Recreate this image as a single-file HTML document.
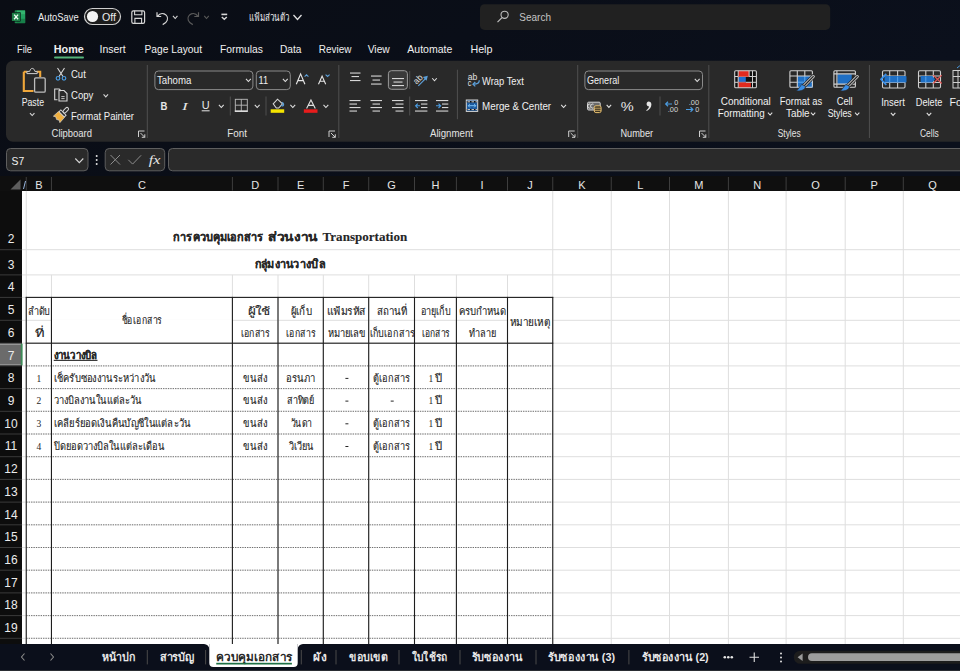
<!DOCTYPE html>
<html><head><meta charset="utf-8"><style>*{margin:0;padding:0}html,body{width:960px;height:671px;overflow:hidden;background:#0a0e16}</style></head><body>
<svg width="960" height="671" viewBox="0 0 960 671" style="position:absolute;left:0;top:0">
<defs>
<linearGradient id="tg" x1="0" y1="0" x2="1" y2="0.3">
<stop offset="0" stop-color="#0a0d14"/><stop offset="0.5" stop-color="#0a0e18"/><stop offset="1" stop-color="#0b101c"/>
</linearGradient>
</defs>
<rect x="0" y="0" width="960" height="176" fill="url(#tg)"/>
<rect x="14.7" y="10.2" width="10.6" height="13.1" rx="0.8" fill="#1f8a4e"/>
<rect x="17" y="10.6" width="8" height="4" fill="#33b36f"/><rect x="17" y="14.6" width="8" height="4.3" fill="#21a060"/><rect x="17" y="18.9" width="8" height="4" fill="#17804a"/>
<rect x="11.4" y="12.3" width="9.4" height="9.2" rx="0.8" fill="#0b0d12"/>
<rect x="11.9" y="12.8" width="8.4" height="8.2" rx="0.6" fill="#1e7f48"/>
<path d="M14.1 14.6l4 4.6M18.1 14.6l-4 4.6" stroke="#f2fff6" stroke-width="1.3"/>
<text x="38.00" y="20.60" font-size="11" fill="#ececec" font-weight="normal" font-family="Liberation Sans" textLength="40.60" lengthAdjust="spacingAndGlyphs" >AutoSave</text>
<rect x="84.5" y="8.5" width="36" height="16" rx="8" fill="#1c1c1c" stroke="#cfcfcf" stroke-width="1.2"/>
<circle cx="92.5" cy="16.5" r="5.6" fill="#f4f4f4"/>
<text x="102.00" y="20.60" font-size="10.5" fill="#ececec" font-weight="normal" font-family="Liberation Sans" textLength="14.00" lengthAdjust="spacingAndGlyphs" >Off</text>
<rect x="131.8" y="10.8" width="12.8" height="12.6" rx="1.6" fill="none" stroke="#d6d6d6" stroke-width="1.2"/>
<path d="M134.6 10.8v3.9h7.3v-3.9M134.9 23.4v-5h6.7v5" fill="none" stroke="#d6d6d6" stroke-width="1.1"/>
<path d="M157 12.3v4.2h4.2M157.5 16.3c1.5-2.2 4.2-3.3 6.7-2.4 2.6 1 3.9 3.8 3 6.5-0.6 1.8-2.3 3.2-4.5 4.2" fill="none" stroke="#d6d6d6" stroke-width="1.2"/>
<path d="M172.95 15.90 L175.20 18.50 L177.45 15.90" fill="none" stroke="#d6d6d6" stroke-width="1.1"/>
<path d="M198.5 12.3v4.2h-4.2M198 16.3c-1.5-2.2-4.2-3.3-6.7-2.4-2.6 1-3.9 3.8-3 6.5 0.6 1.8 2.3 3.2 4.5 4.2" fill="none" stroke="#5a5a5a" stroke-width="1.2"/>
<path d="M204.25 15.90 L206.50 18.50 L208.75 15.90" fill="none" stroke="#5a5a5a" stroke-width="1.1"/>
<rect x="221.4" y="13.6" width="5.8" height="1.6" fill="#d6d6d6"/>
<path d="M221.8 16.9l2.5 2.4 2.5-2.4" fill="none" stroke="#d6d6d6" stroke-width="1.4"/>
<text x="248.70" y="21.00" font-size="11" fill="#ececec" font-weight="normal" font-family="Liberation Sans" textLength="40.60" lengthAdjust="spacingAndGlyphs" >แฟ้มส่วนตัว</text>
<path d="M293.50 15.05 L297.50 19.55 L301.50 15.05" fill="none" stroke="#e0e0e0" stroke-width="1.3"/>
<rect x="480" y="4.2" width="350.2" height="25.7" rx="4.5" fill="#212121"/>
<circle cx="504.6" cy="14.8" r="3.6" fill="none" stroke="#bdbdbd" stroke-width="1.1"/>
<path d="M502 17.6l-4.5 4.6" stroke="#bdbdbd" stroke-width="1.2"/>
<text x="519.30" y="21.00" font-size="11" fill="#c4c4c4" font-weight="normal" font-family="Liberation Sans" textLength="31.70" lengthAdjust="spacingAndGlyphs" >Search</text>
<text x="17.00" y="53.20" font-size="10.6" fill="#f0f0f0" font-weight="normal" font-family="Liberation Sans" textLength="15.00" lengthAdjust="spacingAndGlyphs" >File</text>
<text x="53.75" y="53.20" font-size="10.6" fill="#f0f0f0" font-weight="bold" font-family="Liberation Sans" textLength="30.00" lengthAdjust="spacingAndGlyphs" >Home</text>
<text x="99.50" y="53.20" font-size="10.6" fill="#f0f0f0" font-weight="normal" font-family="Liberation Sans" textLength="26.25" lengthAdjust="spacingAndGlyphs" >Insert</text>
<text x="144.50" y="53.20" font-size="10.6" fill="#f0f0f0" font-weight="normal" font-family="Liberation Sans" textLength="57.50" lengthAdjust="spacingAndGlyphs" >Page Layout</text>
<text x="220.00" y="53.20" font-size="10.6" fill="#f0f0f0" font-weight="normal" font-family="Liberation Sans" textLength="42.90" lengthAdjust="spacingAndGlyphs" >Formulas</text>
<text x="280.00" y="53.20" font-size="10.6" fill="#f0f0f0" font-weight="normal" font-family="Liberation Sans" textLength="21.50" lengthAdjust="spacingAndGlyphs" >Data</text>
<text x="318.80" y="53.20" font-size="10.6" fill="#f0f0f0" font-weight="normal" font-family="Liberation Sans" textLength="32.60" lengthAdjust="spacingAndGlyphs" >Review</text>
<text x="367.70" y="53.20" font-size="10.6" fill="#f0f0f0" font-weight="normal" font-family="Liberation Sans" textLength="22.10" lengthAdjust="spacingAndGlyphs" >View</text>
<text x="407.30" y="53.20" font-size="10.6" fill="#f0f0f0" font-weight="normal" font-family="Liberation Sans" textLength="45.00" lengthAdjust="spacingAndGlyphs" >Automate</text>
<text x="470.40" y="53.20" font-size="10.6" fill="#f0f0f0" font-weight="normal" font-family="Liberation Sans" textLength="22.10" lengthAdjust="spacingAndGlyphs" >Help</text>
<rect x="54" y="56.6" width="30" height="2" rx="1" fill="#55b37a"/>
<rect x="6" y="60.8" width="970" height="81" rx="7" fill="#292929"/>
<rect x="146.80" y="65" width="1" height="73" fill="#4f4f4f"/>
<rect x="338.30" y="65" width="1" height="73" fill="#4f4f4f"/>
<rect x="577.20" y="65" width="1" height="73" fill="#4f4f4f"/>
<rect x="708.30" y="65" width="1" height="73" fill="#4f4f4f"/>
<rect x="868.90" y="65" width="1" height="73" fill="#4f4f4f"/>
<text x="51.60" y="137.10" font-size="10" fill="#e4e4e4" font-weight="normal" font-family="Liberation Sans" textLength="40.40" lengthAdjust="spacingAndGlyphs" >Clipboard</text>
<path d="M138.5 137.0V131.0H144.5" fill="none" stroke="#cfcfcf" stroke-width="1"/>
<path d="M140.5 133.0L144.8 137.3M141.8 137.3H144.8V134.3" fill="none" stroke="#cfcfcf" stroke-width="1"/>
<text x="227.30" y="137.20" font-size="10" fill="#e4e4e4" font-weight="normal" font-family="Liberation Sans" textLength="19.70" lengthAdjust="spacingAndGlyphs" >Font</text>
<path d="M329.0 137.0V131.0H335.0" fill="none" stroke="#cfcfcf" stroke-width="1"/>
<path d="M331.0 133.0L335.3 137.3M332.3 137.3H335.3V134.3" fill="none" stroke="#cfcfcf" stroke-width="1"/>
<text x="430.00" y="137.40" font-size="10" fill="#e4e4e4" font-weight="normal" font-family="Liberation Sans" textLength="43.00" lengthAdjust="spacingAndGlyphs" >Alignment</text>
<path d="M568.7 137.0V131.0H574.7" fill="none" stroke="#cfcfcf" stroke-width="1"/>
<path d="M570.7 133.0L575.0 137.3M572.0 137.3H575.0V134.3" fill="none" stroke="#cfcfcf" stroke-width="1"/>
<text x="620.40" y="137.20" font-size="10" fill="#e4e4e4" font-weight="normal" font-family="Liberation Sans" textLength="32.70" lengthAdjust="spacingAndGlyphs" >Number</text>
<path d="M699.5 137.0V131.0H705.5" fill="none" stroke="#cfcfcf" stroke-width="1"/>
<path d="M701.5 133.0L705.8 137.3M702.8 137.3H705.8V134.3" fill="none" stroke="#cfcfcf" stroke-width="1"/>
<text x="777.70" y="137.20" font-size="10" fill="#e4e4e4" font-weight="normal" font-family="Liberation Sans" textLength="22.90" lengthAdjust="spacingAndGlyphs" >Styles</text>
<text x="920.00" y="137.20" font-size="10" fill="#e4e4e4" font-weight="normal" font-family="Liberation Sans" textLength="18.75" lengthAdjust="spacingAndGlyphs" >Cells</text>
<path d="M23.8 71.8h3.2M37 71.8h3.2v5.2M33.5 91h-9.7V71.8" fill="none" stroke="#f0a73a" stroke-width="2.1"/>
<path d="M26.9 73.6v-2.2l2.8 0c.5-1.8 1.3-3 2.6-3s2.1 1.2 2.6 3l2.3 0v2.2z" fill="#292929" stroke="#cfcfcf" stroke-width="1"/>
<rect x="34.6" y="77.9" width="10.6" height="14.2" rx="1.2" fill="#292929" stroke="#bdbdbd" stroke-width="1.3"/>
<text x="21.70" y="105.50" font-size="10" fill="#f0f0f0" font-weight="normal" font-family="Liberation Sans" textLength="22.30" lengthAdjust="spacingAndGlyphs" >Paste</text>
<path d="M29.95 113.05 L32.20 115.55 L34.45 113.05" fill="none" stroke="#d6d6d6" stroke-width="1.1"/>
<path d="M57.5 68l5.5 8.5M64.5 68l-5.5 8.5" stroke="#d6d6d6" stroke-width="1.1"/>
<circle cx="58" cy="78.3" r="1.8" fill="none" stroke="#4a9be0" stroke-width="1.2"/><circle cx="64" cy="78.3" r="1.8" fill="none" stroke="#4a9be0" stroke-width="1.2"/>
<text x="71.00" y="77.75" font-size="10" fill="#f0f0f0" font-weight="normal" font-family="Liberation Sans" textLength="14.80" lengthAdjust="spacingAndGlyphs" >Cut</text>
<path d="M57.5 99.8h-2.8v-10.8h4.5l2 2" fill="none" stroke="#d6d6d6" stroke-width="1.1"/>
<path d="M59 101v-10.5h5l3 3v7.5z" fill="none" stroke="#d6d6d6" stroke-width="1.1"/><path d="M61.3 96.6h3.3M61.3 98.6h3.3" stroke="#d6d6d6" stroke-width=".9"/>
<text x="71.00" y="99.20" font-size="10" fill="#f0f0f0" font-weight="normal" font-family="Liberation Sans" textLength="22.40" lengthAdjust="spacingAndGlyphs" >Copy</text>
<path d="M103.55 94.35 L105.80 96.85 L108.05 94.35" fill="none" stroke="#d6d6d6" stroke-width="1.1"/>
<g transform="rotate(45 60.5 115.5)">
<rect x="59" y="104.8" width="3" height="6.5" rx="1.5" fill="none" stroke="#d6d6d6" stroke-width="1"/>
<rect x="56.8" y="111.3" width="7.4" height="2.6" fill="none" stroke="#d6d6d6" stroke-width="1"/>
<path d="M56.3 114.2h8.4l.4 6.8-2.2-1.2-2.4 1.3-2.3-1.3-2.3 1.2z" fill="#f0b040" stroke="#d6d6d6" stroke-width="0.6"/>
</g>
<text x="71.00" y="120.00" font-size="10" fill="#f0f0f0" font-weight="normal" font-family="Liberation Sans" textLength="63.00" lengthAdjust="spacingAndGlyphs" >Format Painter</text>
<rect x="154.9" y="71" width="98" height="18.6" rx="3.5" fill="#292929" stroke="#8a8a8a" stroke-width="1"/>
<text x="157.00" y="83.50" font-size="10" fill="#f0f0f0" font-weight="normal" font-family="Liberation Sans" textLength="34.25" lengthAdjust="spacingAndGlyphs" >Tahoma</text>
<path d="M246.00 78.90 L248.40 81.50 L250.80 78.90" fill="none" stroke="#e0e0e0" stroke-width="1.1"/>
<rect x="256.3" y="71" width="34" height="18.6" rx="3.5" fill="#292929" stroke="#8a8a8a" stroke-width="1"/>
<text x="258.50" y="83.50" font-size="10" fill="#f0f0f0" font-weight="normal" font-family="Liberation Sans" textLength="9.50" lengthAdjust="spacingAndGlyphs" >11</text>
<path d="M282.90 78.90 L285.30 81.50 L287.70 78.90" fill="none" stroke="#e0e0e0" stroke-width="1.1"/>
<path d="M296.3 84.2L300.6 73.9 304.9 84.2M297.9 80.6h5.4" fill="none" stroke="#e6e6e6" stroke-width="1.15"/>
<path d="M304.6 76.6l1.9-1.8 1.9 1.8" fill="none" stroke="#5c9fd8" stroke-width="1.1"/>
<path d="M318.5 84.2L322.1 76.1 325.7 84.2M319.8 81.2h4.6" fill="none" stroke="#e6e6e6" stroke-width="1.1"/>
<path d="M325.6 74.6l2 1.8 2-1.8" fill="none" stroke="#5c9fd8" stroke-width="1.1"/>
<text x="160.60" y="109.70" font-size="10.5" fill="#e6e6e6" font-weight="bold" font-family="Liberation Sans" textLength="6.90" lengthAdjust="spacingAndGlyphs" >B</text>
<text x="182.00" y="109.70" font-size="10.5" fill="#e6e6e6" font-weight="normal" font-family="Liberation Serif" textLength="5.70" lengthAdjust="spacingAndGlyphs" font-style="italic">I</text>
<text x="201.70" y="108.50" font-size="10" fill="#e6e6e6" font-weight="normal" font-family="Liberation Sans" textLength="7.90" lengthAdjust="spacingAndGlyphs" >U</text>
<rect x="201.7" y="110.3" width="7.9" height="1" fill="#e6e6e6"/>
<path d="M218.90 104.90 L221.30 107.50 L223.70 104.90" fill="none" stroke="#e0e0e0" stroke-width="1.1"/>
<rect x="229.8" y="96.5" width="1" height="19" fill="#4f4f4f"/>
<rect x="235.3" y="99.3" width="12" height="11.8" fill="none" stroke="#bcbcbc" stroke-width="0.9"/><path d="M241.3 99.3v11.8M235.3 105.2h12" stroke="#bcbcbc" stroke-width="0.9"/>
<rect x="234.8" y="110.5" width="13" height="1.4" fill="#e6e6e6"/>
<path d="M254.80 104.90 L257.20 107.50 L259.60 104.90" fill="none" stroke="#e0e0e0" stroke-width="1.1"/>
<rect x="265.5" y="96.5" width="1" height="19" fill="#4f4f4f"/>
<path d="M273.2 103.8l4.3-4.6 5 4.7-3.8 4.1h-2.4z" fill="none" stroke="#d6d6d6" stroke-width="1.1"/><path d="M282.3 102.2c1.2 1.2 1.6 2.4.9 3.4-.6.6-1.5.4-1.7-.4" stroke="#5c9fd8" stroke-width="1.3" fill="none"/>
<rect x="270.7" y="109.3" width="13.5" height="3.5" fill="#f5e400"/>
<path d="M290.40 104.90 L292.80 107.50 L295.20 104.90" fill="none" stroke="#e0e0e0" stroke-width="1.1"/>
<path d="M306.6 108.6L310.95 100l4.35 8.6M308.2 105.4h5.5" fill="none" stroke="#e0e0e0" stroke-width="1.1"/>
<rect x="303.85" y="109.3" width="13.65" height="3.5" fill="#e81c1c"/>
<path d="M323.50 104.90 L325.90 107.50 L328.30 104.90" fill="none" stroke="#e0e0e0" stroke-width="1.1"/>
<rect x="350.00" y="72.50" width="10.50" height="1.1" fill="#d6d6d6"/>
<rect x="351.50" y="76.00" width="7.50" height="1.1" fill="#d6d6d6"/>
<rect x="350.00" y="80.00" width="10.50" height="1.1" fill="#d6d6d6"/>
<rect x="371.00" y="75.50" width="10.60" height="1.1" fill="#d6d6d6"/>
<rect x="372.50" y="79.50" width="7.50" height="1.1" fill="#d6d6d6"/>
<rect x="371.00" y="83.50" width="10.60" height="1.1" fill="#d6d6d6"/>
<rect x="388.4" y="70.7" width="19" height="18.6" rx="3" fill="#3a3a3a" stroke="#9a9a9a" stroke-width="1"/>
<rect x="392.00" y="78.00" width="12.00" height="1.1" fill="#d6d6d6"/>
<rect x="393.50" y="81.50" width="9.00" height="1.1" fill="#d6d6d6"/>
<rect x="392.00" y="85.00" width="12.00" height="1.1" fill="#d6d6d6"/>
<rect x="409.2" y="71" width="1" height="18" fill="#4f4f4f"/>
<text x="417.8" y="82.2" font-size="8.5" fill="#e0e0e0" font-family="Liberation Sans" text-anchor="middle" transform="rotate(-45 417.8 79.2)">ab</text>
<path d="M418.3 85.8l8.2-8.2" fill="none" stroke="#5c9fd8" stroke-width="1.2"/><path d="M427.8 75.8l-5 1.2 3.8 3.8z" fill="#5c9fd8"/>
<path d="M432.25 78.25 L434.50 80.75 L436.75 78.25" fill="none" stroke="#e0e0e0" stroke-width="1.1"/>
<rect x="349.50" y="100.00" width="11.00" height="1.1" fill="#d6d6d6"/>
<rect x="349.50" y="103.50" width="7.50" height="1.1" fill="#d6d6d6"/>
<rect x="349.50" y="107.00" width="11.00" height="1.1" fill="#d6d6d6"/>
<rect x="349.50" y="110.50" width="7.50" height="1.1" fill="#d6d6d6"/>
<rect x="370.50" y="100.00" width="11.50" height="1.1" fill="#d6d6d6"/>
<rect x="372.50" y="103.50" width="7.50" height="1.1" fill="#d6d6d6"/>
<rect x="370.50" y="107.00" width="11.50" height="1.1" fill="#d6d6d6"/>
<rect x="372.50" y="110.50" width="7.50" height="1.1" fill="#d6d6d6"/>
<rect x="392.00" y="100.00" width="11.50" height="1.1" fill="#d6d6d6"/>
<rect x="395.50" y="103.50" width="8.00" height="1.1" fill="#d6d6d6"/>
<rect x="392.00" y="107.00" width="11.50" height="1.1" fill="#d6d6d6"/>
<rect x="395.50" y="110.50" width="8.00" height="1.1" fill="#d6d6d6"/>
<rect x="409.2" y="96.5" width="1" height="19" fill="#4f4f4f"/>
<rect x="415.00" y="100.00" width="12.40" height="1.1" fill="#d6d6d6"/>
<rect x="415.00" y="110.50" width="12.40" height="1.1" fill="#d6d6d6"/>
<rect x="421.00" y="103.50" width="6.40" height="1.1" fill="#d6d6d6"/>
<rect x="421.00" y="107.00" width="6.40" height="1.1" fill="#d6d6d6"/>
<path d="M420 105.8h-4.5M417.8 103.6l-2.2 2.2 2.2 2.2" fill="none" stroke="#4a9be0" stroke-width="1.1"/>
<rect x="436.00" y="100.00" width="12.30" height="1.1" fill="#d6d6d6"/>
<rect x="436.00" y="110.50" width="12.30" height="1.1" fill="#d6d6d6"/>
<rect x="442.00" y="103.50" width="6.30" height="1.1" fill="#d6d6d6"/>
<rect x="442.00" y="107.00" width="6.30" height="1.1" fill="#d6d6d6"/>
<path d="M436 105.8h4.5M438.5 103.6l2.2 2.2-2.2 2.2" fill="none" stroke="#4a9be0" stroke-width="1.1"/>
<rect x="456.9" y="69.7" width="1" height="49.5" fill="#4f4f4f"/>
<text x="467.70" y="79.60" font-size="8.5" fill="#e0e0e0" font-weight="normal" font-family="Liberation Sans" textLength="9.60" lengthAdjust="spacingAndGlyphs" >ab</text>
<text x="467.70" y="85.60" font-size="8.5" fill="#e0e0e0" font-weight="normal" font-family="Liberation Sans" textLength="3.70" lengthAdjust="spacingAndGlyphs" >c</text>
<path d="M479.3 80.3c0 2.6-1.9 3.9-5.6 3.9" fill="none" stroke="#5c9fd8" stroke-width="1.3"/><path d="M475.3 82l-2.3 2.2 2.3 2.2" fill="none" stroke="#5c9fd8" stroke-width="1.3"/>
<text x="482.10" y="84.60" font-size="10" fill="#f0f0f0" font-weight="normal" font-family="Liberation Sans" textLength="41.70" lengthAdjust="spacingAndGlyphs" >Wrap Text</text>
<rect x="466.3" y="100" width="11.4" height="11.4" fill="#1c5a9e" stroke="#d6d6d6" stroke-width="1"/>
<path d="M466.8 101.8h10.4M466.8 109.6h10.4" stroke="#101010" stroke-width="1.4"/><path d="M467.5 101.8h10M467.5 109.6h10" stroke="#d0d0d0" stroke-width="1" stroke-dasharray="2.5 1.5"/>
<path d="M468.2 105.7h7.6M469.9 104l-1.7 1.7 1.7 1.7M474.1 104l1.7 1.7-1.7 1.7" fill="none" stroke="#7cc0f5" stroke-width="1"/>
<text x="482.10" y="110.10" font-size="10" fill="#f0f0f0" font-weight="normal" font-family="Liberation Sans" textLength="69.00" lengthAdjust="spacingAndGlyphs" >Merge &amp; Center</text>
<path d="M561.20 104.90 L563.60 107.50 L566.00 104.90" fill="none" stroke="#e0e0e0" stroke-width="1.1"/>
<rect x="584.9" y="71" width="117.6" height="18.6" rx="3.5" fill="#292929" stroke="#8a8a8a" stroke-width="1"/>
<text x="587.00" y="83.50" font-size="10" fill="#f0f0f0" font-weight="normal" font-family="Liberation Sans" textLength="32.20" lengthAdjust="spacingAndGlyphs" >General</text>
<path d="M694.80 78.90 L697.20 81.50 L699.60 78.90" fill="none" stroke="#e0e0e0" stroke-width="1.1"/>
<rect x="587.6" y="102.2" width="12.6" height="7.8" rx="1" fill="#6a6a6a" stroke="#d6d6d6" stroke-width="1"/>
<path d="M590.5 104.3a2 2 0 1 0 0 3.6M593.5 104.3a2 2 0 1 0 0 3.6" fill="none" stroke="#f0f0f0" stroke-width="0.9"/>
<rect x="594.3" y="105.8" width="6.8" height="6.8" rx="1.6" fill="#3b3220" stroke="#e8c070" stroke-width="1"/><path d="M594.5 108.2h6.5M594.5 110.3h6.5" stroke="#e8c070" stroke-width="0.8"/>
<path d="M606.65 104.95 L608.90 107.45 L611.15 104.95" fill="none" stroke="#e0e0e0" stroke-width="1.1"/>
<text x="620.80" y="111.30" font-size="13" fill="#e6e6e6" font-weight="normal" font-family="Liberation Sans" textLength="12.95" lengthAdjust="spacingAndGlyphs" >%</text>
<path d="M648.5 101.5c1.8 0 2.9 1.2 2.9 2.9 0 2.8-1.8 5.2-4.6 6.6l-.6-.8c1.5-.9 2.6-2.2 2.9-3.7-1.5 0-2.5-1-2.5-2.4s1-2.6 1.9-2.6z" fill="#e6e6e6"/>
<rect x="659.5" y="96.5" width="1" height="19" fill="#4f4f4f"/>
<path d="M672 104h-6.5M668 101.8l-2.3 2.2 2.3 2.2" fill="none" stroke="#4a9be0" stroke-width="1.2"/>
<text x="674.20" y="105.20" font-size="7.3" fill="#d6d6d6" font-weight="normal" font-family="Liberation Sans" textLength="4.00" lengthAdjust="spacingAndGlyphs" >0</text>
<text x="667.80" y="111.90" font-size="7.3" fill="#d6d6d6" font-weight="normal" font-family="Liberation Sans" textLength="10.40" lengthAdjust="spacingAndGlyphs" >.00</text>
<text x="688.80" y="105.20" font-size="7.3" fill="#d6d6d6" font-weight="normal" font-family="Liberation Sans" textLength="10.40" lengthAdjust="spacingAndGlyphs" >.00</text>
<path d="M686 109.5h6.8M690.5 107.3l2.3 2.2-2.3 2.2" fill="none" stroke="#4a9be0" stroke-width="1.2"/>
<text x="695.20" y="111.90" font-size="7.3" fill="#d6d6d6" font-weight="normal" font-family="Liberation Sans" textLength="4.00" lengthAdjust="spacingAndGlyphs" >0</text>
<rect x="734.7" y="70.8" width="21.7" height="17" rx="1" fill="#101010"/>
<rect x="738.2" y="70.8" width="10.9" height="5.7" fill="#e02a1f"/><rect x="738.2" y="82.3" width="12.7" height="5.5" fill="#e02a1f"/><rect x="738.2" y="76.5" width="7.6" height="5.8" fill="#1f6fd0"/>
<rect x="734.7" y="70.8" width="21.7" height="17" rx="1" fill="none" stroke="#cfcfcf" stroke-width="1.1"/>
<path d="M734.7 76.5h3.5M749.1 76.5h7.3M734.7 82.3h3.5M745.8 82.3h10.6M738.2 70.8v17M752.5 70.8v17M749.1 70.8v5.7" stroke="#cfcfcf" stroke-width="1" fill="none"/>
<path d="M738.2 76.5h10.9M738.2 82.3h7.6" stroke="#f07060" stroke-width="0.8" fill="none"/>
<text x="720.80" y="104.90" font-size="10" fill="#f0f0f0" font-weight="normal" font-family="Liberation Sans" textLength="50.00" lengthAdjust="spacingAndGlyphs" >Conditional</text>
<text x="717.70" y="117.40" font-size="10" fill="#f0f0f0" font-weight="normal" font-family="Liberation Sans" textLength="46.90" lengthAdjust="spacingAndGlyphs" >Formatting</text>
<path d="M767.95 112.60 L770.10 115.00 L772.25 112.60" fill="none" stroke="#e0e0e0" stroke-width="1.1"/>
<rect x="797.3" y="76" width="15.5" height="11.8" fill="#1f6fc4"/>
<path d="M797.3 82.2h15.5M804.8 76v11.8" stroke="#5aa8f0" stroke-width="1"/>
<rect x="789.9" y="70.7" width="22.5" height="16.6" rx="1" fill="none" stroke="#cfcfcf" stroke-width="1.1"/>
<path d="M789.9 76h7.4M789.9 82.2h7.4M797.3 70.7v16.6M804.8 70.7v5.3M797.3 76h15.1" stroke="#cfcfcf" stroke-width="1.1" fill="none"/>
<line x1="813.3" y1="76.5" x2="803.5" y2="86.5" stroke="#292929" stroke-width="4.6" stroke-linecap="round"/>
<line x1="813.3" y1="76.5" x2="803.5" y2="86.5" stroke="#d6d6d6" stroke-width="3" stroke-linecap="round"/>
<line x1="813.3" y1="76.5" x2="803.5" y2="86.5" stroke="#292929" stroke-width="1.2" stroke-linecap="round"/>
<path d="M805.50 86.20C805.30 89.70 801.50 91.30 796.30 90.90C798.90 89.50 799.30 86.30 801.90 84.50Z" fill="#3a8ee6" stroke="#292929" stroke-width="0.7"/>
<text x="779.80" y="104.90" font-size="10" fill="#f0f0f0" font-weight="normal" font-family="Liberation Sans" textLength="42.30" lengthAdjust="spacingAndGlyphs" >Format as</text>
<text x="786.00" y="117.40" font-size="10" fill="#f0f0f0" font-weight="normal" font-family="Liberation Sans" textLength="23.60" lengthAdjust="spacingAndGlyphs" >Table</text>
<path d="M810.95 112.60 L813.10 115.00 L815.25 112.60" fill="none" stroke="#e0e0e0" stroke-width="1.1"/>
<rect x="837.4" y="74.2" width="14.3" height="9.8" fill="#1f6fc4"/>
<rect x="833.9" y="70.7" width="21.5" height="16.6" rx="1" fill="none" stroke="#cfcfcf" stroke-width="1.1"/>
<path d="M833.9 73.9h21.5M833.9 84.1h21.5M836.9 70.7v16.6" stroke="#cfcfcf" stroke-width="1.1" fill="none"/>
<line x1="857.3" y1="76.5" x2="847.5" y2="86.5" stroke="#292929" stroke-width="4.6" stroke-linecap="round"/>
<line x1="857.3" y1="76.5" x2="847.5" y2="86.5" stroke="#d6d6d6" stroke-width="3" stroke-linecap="round"/>
<line x1="857.3" y1="76.5" x2="847.5" y2="86.5" stroke="#292929" stroke-width="1.2" stroke-linecap="round"/>
<path d="M849.50 86.20C849.30 89.70 845.50 91.30 840.30 90.90C842.90 89.50 843.30 86.30 845.90 84.50Z" fill="#3a8ee6" stroke="#292929" stroke-width="0.7"/>
<text x="836.70" y="104.90" font-size="10" fill="#f0f0f0" font-weight="normal" font-family="Liberation Sans" textLength="16.00" lengthAdjust="spacingAndGlyphs" >Cell</text>
<text x="827.70" y="117.40" font-size="10" fill="#f0f0f0" font-weight="normal" font-family="Liberation Sans" textLength="24.00" lengthAdjust="spacingAndGlyphs" >Styles</text>
<path d="M855.05 112.60 L857.20 115.00 L859.35 112.60" fill="none" stroke="#e0e0e0" stroke-width="1.1"/>
<rect x="882.5" y="70.7" width="22.5" height="17.3" rx="1.2" fill="none" stroke="#cfcfcf" stroke-width="1.1"/>
<path d="M882.5 76h22.5M882.5 82.5h22.5M889.7 70.7v17.3M897.6 70.7v17.3" stroke="#cfcfcf" stroke-width="1.1"/>
<rect x="884.5" y="76" width="22" height="6.6" rx="0.8" fill="#1f6fc4"/>
<path d="M889.7 76.5v5.6M897.6 76.5v5.6" stroke="#5aa8f0" stroke-width="0.9"/>
<path d="M886.3 73.8L881 79.3 886.3 84.8" fill="none" stroke="#3a8ee6" stroke-width="1.7"/>
<text x="881.25" y="105.50" font-size="10" fill="#f0f0f0" font-weight="normal" font-family="Liberation Sans" textLength="23.55" lengthAdjust="spacingAndGlyphs" >Insert</text>
<path d="M890.85 112.95 L893.10 115.45 L895.35 112.95" fill="none" stroke="#e0e0e0" stroke-width="1.1"/>
<rect x="918.5" y="70.7" width="22" height="17.3" rx="1.2" fill="none" stroke="#cfcfcf" stroke-width="1.1"/>
<path d="M918.5 76h22M918.5 82.5h22M925.8 70.7v17.3M933.3 70.7v17.3" stroke="#cfcfcf" stroke-width="1.1"/>
<path d="M920.6 76h11.5l3 3.3-3 3.3h-11.5z" fill="#1f6fc4"/>
<path d="M925.8 76.5v5.6" stroke="#5aa8f0" stroke-width="0.9"/>
<path d="M933.3 75.1l8.4 8.4M941.7 75.1l-8.4 8.4" stroke="#e05454" stroke-width="1.2"/>
<text x="915.80" y="105.50" font-size="10" fill="#f0f0f0" font-weight="normal" font-family="Liberation Sans" textLength="26.50" lengthAdjust="spacingAndGlyphs" >Delete</text>
<path d="M926.75 112.95 L929.00 115.45 L931.25 112.95" fill="none" stroke="#e0e0e0" stroke-width="1.1"/>
<rect x="953" y="70.5" width="12" height="17.5" fill="none" stroke="#cfcfcf" stroke-width="1"/><path d="M953 76.5h12M953 82.5h12M958 70.5v17.5" stroke="#cfcfcf" stroke-width="1"/>
<path d="M957 68l2.5-2 2.5 2" fill="none" stroke="#4a9be0" stroke-width="1"/>
<text x="949.60" y="105.50" font-size="10" fill="#f0f0f0" font-weight="normal" font-family="Liberation Sans" textLength="12.40" lengthAdjust="spacingAndGlyphs" >Fo</text>
<rect x="6.5" y="148.5" width="81.5" height="22.3" rx="4" fill="#2a2a2a" stroke="#5f5f5f" stroke-width="1"/>
<text x="11.50" y="164.80" font-size="11.5" fill="#f0f0f0" font-weight="normal" font-family="Liberation Sans" textLength="12.70" lengthAdjust="spacingAndGlyphs" >S7</text>
<path d="M75.30 158.50 L79.30 162.70 L83.30 158.50" fill="none" stroke="#d6d6d6" stroke-width="1.1"/>
<circle cx="96.7" cy="156" r="1" fill="#e0e0e0"/>
<circle cx="96.7" cy="160" r="1" fill="#e0e0e0"/>
<circle cx="96.7" cy="164" r="1" fill="#e0e0e0"/>
<rect x="105.2" y="148.5" width="59.5" height="22.3" rx="4" fill="#2a2a2a" stroke="#5f5f5f" stroke-width="1"/>
<path d="M110.5 155l9.5 9.5M120 155l-9.5 9.5" stroke="#8c8c8c" stroke-width="1"/>
<path d="M128.3 159.8l4.3 4.3 8.5-8.8" fill="none" stroke="#8c8c8c" stroke-width="1"/>
<text x="148.70" y="164.30" font-size="12" fill="#e6e6e6" font-weight="normal" font-family="Liberation Serif" textLength="11.60" lengthAdjust="spacingAndGlyphs" font-style="italic">fx</text>
<rect x="168.5" y="148.5" width="800" height="22.3" rx="4" fill="#2a2a2a" stroke="#5f5f5f" stroke-width="1"/>
<rect x="0" y="176" width="960" height="468" fill="#ffffff"/>
<rect x="0" y="176" width="960" height="15" fill="#0f0f0f"/>
<rect x="0" y="191" width="22" height="453" fill="#0d0d0d"/>
<path d="M10.5 189.5L20.5 179.5V189.5z" fill="#5e5e5e"/>
<rect x="25.75" y="177.00" width="1.0" height="13.50" fill="#3e3e3e"/>
<rect x="50.95" y="177.00" width="1.0" height="13.50" fill="#3e3e3e"/>
<rect x="231.90" y="177.00" width="1.0" height="13.50" fill="#3e3e3e"/>
<rect x="277.50" y="177.00" width="1.0" height="13.50" fill="#3e3e3e"/>
<rect x="322.80" y="177.00" width="1.0" height="13.50" fill="#3e3e3e"/>
<rect x="368.20" y="177.00" width="1.0" height="13.50" fill="#3e3e3e"/>
<rect x="414.00" y="177.00" width="1.0" height="13.50" fill="#3e3e3e"/>
<rect x="455.90" y="177.00" width="1.0" height="13.50" fill="#3e3e3e"/>
<rect x="507.00" y="177.00" width="1.0" height="13.50" fill="#3e3e3e"/>
<rect x="552.25" y="177.00" width="1.0" height="13.50" fill="#3e3e3e"/>
<rect x="610.75" y="177.00" width="1.0" height="13.50" fill="#3e3e3e"/>
<rect x="669.00" y="177.00" width="1.0" height="13.50" fill="#3e3e3e"/>
<rect x="727.90" y="177.00" width="1.0" height="13.50" fill="#3e3e3e"/>
<rect x="785.60" y="177.00" width="1.0" height="13.50" fill="#3e3e3e"/>
<rect x="844.70" y="177.00" width="1.0" height="13.50" fill="#3e3e3e"/>
<rect x="902.80" y="177.00" width="1.0" height="13.50" fill="#3e3e3e"/>
<path d="M23.5 189l2-8" stroke="#9ab8e0" stroke-width="1"/>
<text x="38.85" y="188.6" font-size="11" fill="#e6e6e6" text-anchor="middle" font-family="Liberation Sans">B</text>
<text x="141.93" y="188.6" font-size="11" fill="#e6e6e6" text-anchor="middle" font-family="Liberation Sans">C</text>
<text x="255.20" y="188.6" font-size="11" fill="#e6e6e6" text-anchor="middle" font-family="Liberation Sans">D</text>
<text x="300.65" y="188.6" font-size="11" fill="#e6e6e6" text-anchor="middle" font-family="Liberation Sans">E</text>
<text x="346.00" y="188.6" font-size="11" fill="#e6e6e6" text-anchor="middle" font-family="Liberation Sans">F</text>
<text x="391.60" y="188.6" font-size="11" fill="#e6e6e6" text-anchor="middle" font-family="Liberation Sans">G</text>
<text x="435.45" y="188.6" font-size="11" fill="#e6e6e6" text-anchor="middle" font-family="Liberation Sans">H</text>
<text x="481.95" y="188.6" font-size="11" fill="#e6e6e6" text-anchor="middle" font-family="Liberation Sans">I</text>
<text x="530.12" y="188.6" font-size="11" fill="#e6e6e6" text-anchor="middle" font-family="Liberation Sans">J</text>
<text x="582.00" y="188.6" font-size="11" fill="#e6e6e6" text-anchor="middle" font-family="Liberation Sans">K</text>
<text x="640.38" y="188.6" font-size="11" fill="#e6e6e6" text-anchor="middle" font-family="Liberation Sans">L</text>
<text x="698.95" y="188.6" font-size="11" fill="#e6e6e6" text-anchor="middle" font-family="Liberation Sans">M</text>
<text x="757.25" y="188.6" font-size="11" fill="#e6e6e6" text-anchor="middle" font-family="Liberation Sans">N</text>
<text x="815.65" y="188.6" font-size="11" fill="#e6e6e6" text-anchor="middle" font-family="Liberation Sans">O</text>
<text x="874.25" y="188.6" font-size="11" fill="#e6e6e6" text-anchor="middle" font-family="Liberation Sans">P</text>
<text x="932.65" y="188.6" font-size="11" fill="#e6e6e6" text-anchor="middle" font-family="Liberation Sans">Q</text>
<rect x="22.00" y="249.20" width="938.00" height="1.0" fill="#dedede"/>
<rect x="22.00" y="274.40" width="938.00" height="1.0" fill="#dedede"/>
<rect x="22.00" y="296.90" width="938.00" height="1.0" fill="#dedede"/>
<rect x="22.00" y="319.80" width="938.00" height="1.0" fill="#dedede"/>
<rect x="22.00" y="342.70" width="938.00" height="1.0" fill="#dedede"/>
<rect x="22.00" y="365.40" width="938.00" height="1.0" fill="#dedede"/>
<rect x="22.00" y="388.10" width="938.00" height="1.0" fill="#dedede"/>
<rect x="22.00" y="410.80" width="938.00" height="1.0" fill="#dedede"/>
<rect x="22.00" y="433.50" width="938.00" height="1.0" fill="#dedede"/>
<rect x="22.00" y="456.20" width="938.00" height="1.0" fill="#dedede"/>
<rect x="22.00" y="478.90" width="938.00" height="1.0" fill="#dedede"/>
<rect x="22.00" y="501.60" width="938.00" height="1.0" fill="#dedede"/>
<rect x="22.00" y="524.30" width="938.00" height="1.0" fill="#dedede"/>
<rect x="22.00" y="547.00" width="938.00" height="1.0" fill="#dedede"/>
<rect x="22.00" y="569.70" width="938.00" height="1.0" fill="#dedede"/>
<rect x="22.00" y="592.40" width="938.00" height="1.0" fill="#dedede"/>
<rect x="22.00" y="615.10" width="938.00" height="1.0" fill="#dedede"/>
<rect x="22.00" y="637.80" width="938.00" height="1.0" fill="#dedede"/>
<rect x="22.00" y="660.50" width="938.00" height="1.0" fill="#dedede"/>
<rect x="25.75" y="191.00" width="1.0" height="453.00" fill="#dedede"/>
<rect x="50.95" y="274.90" width="1.0" height="369.10" fill="#dedede"/>
<rect x="231.90" y="274.90" width="1.0" height="369.10" fill="#dedede"/>
<rect x="277.50" y="274.90" width="1.0" height="369.10" fill="#dedede"/>
<rect x="322.80" y="274.90" width="1.0" height="369.10" fill="#dedede"/>
<rect x="368.20" y="274.90" width="1.0" height="369.10" fill="#dedede"/>
<rect x="414.00" y="274.90" width="1.0" height="369.10" fill="#dedede"/>
<rect x="455.90" y="274.90" width="1.0" height="369.10" fill="#dedede"/>
<rect x="507.00" y="274.90" width="1.0" height="369.10" fill="#dedede"/>
<rect x="552.25" y="191.00" width="1.0" height="453.00" fill="#dedede"/>
<rect x="610.75" y="191.00" width="1.0" height="453.00" fill="#dedede"/>
<rect x="669.00" y="191.00" width="1.0" height="453.00" fill="#dedede"/>
<rect x="727.90" y="191.00" width="1.0" height="453.00" fill="#dedede"/>
<rect x="785.60" y="191.00" width="1.0" height="453.00" fill="#dedede"/>
<rect x="844.70" y="191.00" width="1.0" height="453.00" fill="#dedede"/>
<rect x="902.80" y="191.00" width="1.0" height="453.00" fill="#dedede"/>
<rect x="51.95" y="319.30" width="179.95" height="2" fill="#ffffff"/>
<rect x="508.00" y="319.30" width="44.25" height="2" fill="#ffffff"/>
<rect x="26.25" y="365.30" width="526.50" height="1.2" fill="#ffffff"/>
<line x1="26.25" y1="365.90" x2="552.75" y2="365.90" stroke="#707070" stroke-width="1" stroke-dasharray="1.4 1"/>
<rect x="26.25" y="388.00" width="526.50" height="1.2" fill="#ffffff"/>
<line x1="26.25" y1="388.60" x2="552.75" y2="388.60" stroke="#707070" stroke-width="1" stroke-dasharray="1.4 1"/>
<rect x="26.25" y="410.70" width="526.50" height="1.2" fill="#ffffff"/>
<line x1="26.25" y1="411.30" x2="552.75" y2="411.30" stroke="#707070" stroke-width="1" stroke-dasharray="1.4 1"/>
<rect x="26.25" y="433.40" width="526.50" height="1.2" fill="#ffffff"/>
<line x1="26.25" y1="434.00" x2="552.75" y2="434.00" stroke="#707070" stroke-width="1" stroke-dasharray="1.4 1"/>
<rect x="26.25" y="456.10" width="526.50" height="1.2" fill="#ffffff"/>
<line x1="26.25" y1="456.70" x2="552.75" y2="456.70" stroke="#707070" stroke-width="1" stroke-dasharray="1.4 1"/>
<rect x="26.25" y="478.80" width="526.50" height="1.2" fill="#ffffff"/>
<line x1="26.25" y1="479.40" x2="552.75" y2="479.40" stroke="#707070" stroke-width="1" stroke-dasharray="1.4 1"/>
<rect x="26.25" y="501.50" width="526.50" height="1.2" fill="#ffffff"/>
<line x1="26.25" y1="502.10" x2="552.75" y2="502.10" stroke="#707070" stroke-width="1" stroke-dasharray="1.4 1"/>
<rect x="26.25" y="524.20" width="526.50" height="1.2" fill="#ffffff"/>
<line x1="26.25" y1="524.80" x2="552.75" y2="524.80" stroke="#707070" stroke-width="1" stroke-dasharray="1.4 1"/>
<rect x="26.25" y="546.90" width="526.50" height="1.2" fill="#ffffff"/>
<line x1="26.25" y1="547.50" x2="552.75" y2="547.50" stroke="#707070" stroke-width="1" stroke-dasharray="1.4 1"/>
<rect x="26.25" y="569.60" width="526.50" height="1.2" fill="#ffffff"/>
<line x1="26.25" y1="570.20" x2="552.75" y2="570.20" stroke="#707070" stroke-width="1" stroke-dasharray="1.4 1"/>
<rect x="26.25" y="592.30" width="526.50" height="1.2" fill="#ffffff"/>
<line x1="26.25" y1="592.90" x2="552.75" y2="592.90" stroke="#707070" stroke-width="1" stroke-dasharray="1.4 1"/>
<rect x="26.25" y="615.00" width="526.50" height="1.2" fill="#ffffff"/>
<line x1="26.25" y1="615.60" x2="552.75" y2="615.60" stroke="#707070" stroke-width="1" stroke-dasharray="1.4 1"/>
<rect x="26.25" y="637.70" width="526.50" height="1.2" fill="#ffffff"/>
<line x1="26.25" y1="638.30" x2="552.75" y2="638.30" stroke="#707070" stroke-width="1" stroke-dasharray="1.4 1"/>
<rect x="26.25" y="660.40" width="526.50" height="1.2" fill="#ffffff"/>
<line x1="26.25" y1="661.00" x2="552.75" y2="661.00" stroke="#707070" stroke-width="1" stroke-dasharray="1.4 1"/>
<rect x="25.70" y="296.90" width="1.1" height="347.10" fill="#1e1e1e"/>
<rect x="50.90" y="296.90" width="1.1" height="347.10" fill="#1e1e1e"/>
<rect x="231.85" y="296.90" width="1.1" height="347.10" fill="#1e1e1e"/>
<rect x="277.45" y="296.90" width="1.1" height="347.10" fill="#1e1e1e"/>
<rect x="322.75" y="296.90" width="1.1" height="347.10" fill="#1e1e1e"/>
<rect x="368.15" y="296.90" width="1.1" height="347.10" fill="#1e1e1e"/>
<rect x="413.95" y="296.90" width="1.1" height="347.10" fill="#1e1e1e"/>
<rect x="455.85" y="296.90" width="1.1" height="347.10" fill="#1e1e1e"/>
<rect x="506.95" y="296.90" width="1.1" height="347.10" fill="#1e1e1e"/>
<rect x="552.20" y="296.90" width="1.1" height="347.10" fill="#1e1e1e"/>
<rect x="25.75" y="296.85" width="527.50" height="1.1" fill="#1e1e1e"/>
<rect x="25.75" y="342.65" width="527.50" height="1.1" fill="#1e1e1e"/>
<rect x="0.00" y="249.20" width="22.00" height="1.0" fill="#3a3a3a"/>
<text x="11" y="243.40" font-size="12" fill="#ececec" text-anchor="middle" font-family="Liberation Sans">2</text>
<rect x="0.00" y="274.40" width="22.00" height="1.0" fill="#3a3a3a"/>
<text x="11" y="268.60" font-size="12" fill="#ececec" text-anchor="middle" font-family="Liberation Sans">3</text>
<rect x="0.00" y="296.90" width="22.00" height="1.0" fill="#3a3a3a"/>
<text x="11" y="291.10" font-size="12" fill="#ececec" text-anchor="middle" font-family="Liberation Sans">4</text>
<rect x="0.00" y="319.80" width="22.00" height="1.0" fill="#3a3a3a"/>
<text x="11" y="314.00" font-size="12" fill="#ececec" text-anchor="middle" font-family="Liberation Sans">5</text>
<rect x="0.00" y="342.70" width="22.00" height="1.0" fill="#3a3a3a"/>
<text x="11" y="336.90" font-size="12" fill="#ececec" text-anchor="middle" font-family="Liberation Sans">6</text>
<rect x="0" y="343.70" width="22" height="21.70" fill="#6b6b6b"/>
<rect x="0.00" y="343.70" width="21.00" height="1.0" fill="#a8a8a8"/>
<rect x="0.00" y="364.40" width="21.00" height="1.0" fill="#a8a8a8"/>
<rect x="20.8" y="343.70" width="1.8" height="21.70" fill="#3c8a57"/>
<rect x="0.00" y="365.40" width="22.00" height="1.0" fill="#3a3a3a"/>
<text x="11" y="359.60" font-size="12" fill="#ececec" text-anchor="middle" font-family="Liberation Sans">7</text>
<rect x="0.00" y="388.10" width="22.00" height="1.0" fill="#3a3a3a"/>
<text x="11" y="382.30" font-size="12" fill="#ececec" text-anchor="middle" font-family="Liberation Sans">8</text>
<rect x="0.00" y="410.80" width="22.00" height="1.0" fill="#3a3a3a"/>
<text x="11" y="405.00" font-size="12" fill="#ececec" text-anchor="middle" font-family="Liberation Sans">9</text>
<rect x="0.00" y="433.50" width="22.00" height="1.0" fill="#3a3a3a"/>
<text x="11" y="427.70" font-size="12" fill="#ececec" text-anchor="middle" font-family="Liberation Sans">10</text>
<rect x="0.00" y="456.20" width="22.00" height="1.0" fill="#3a3a3a"/>
<text x="11" y="450.40" font-size="12" fill="#ececec" text-anchor="middle" font-family="Liberation Sans">11</text>
<rect x="0.00" y="478.90" width="22.00" height="1.0" fill="#3a3a3a"/>
<text x="11" y="473.10" font-size="12" fill="#ececec" text-anchor="middle" font-family="Liberation Sans">12</text>
<rect x="0.00" y="501.60" width="22.00" height="1.0" fill="#3a3a3a"/>
<text x="11" y="495.80" font-size="12" fill="#ececec" text-anchor="middle" font-family="Liberation Sans">13</text>
<rect x="0.00" y="524.30" width="22.00" height="1.0" fill="#3a3a3a"/>
<text x="11" y="518.50" font-size="12" fill="#ececec" text-anchor="middle" font-family="Liberation Sans">14</text>
<rect x="0.00" y="547.00" width="22.00" height="1.0" fill="#3a3a3a"/>
<text x="11" y="541.20" font-size="12" fill="#ececec" text-anchor="middle" font-family="Liberation Sans">15</text>
<rect x="0.00" y="569.70" width="22.00" height="1.0" fill="#3a3a3a"/>
<text x="11" y="563.90" font-size="12" fill="#ececec" text-anchor="middle" font-family="Liberation Sans">16</text>
<rect x="0.00" y="592.40" width="22.00" height="1.0" fill="#3a3a3a"/>
<text x="11" y="586.60" font-size="12" fill="#ececec" text-anchor="middle" font-family="Liberation Sans">17</text>
<rect x="0.00" y="615.10" width="22.00" height="1.0" fill="#3a3a3a"/>
<text x="11" y="609.30" font-size="12" fill="#ececec" text-anchor="middle" font-family="Liberation Sans">18</text>
<rect x="0.00" y="637.80" width="22.00" height="1.0" fill="#3a3a3a"/>
<text x="11" y="632.00" font-size="12" fill="#ececec" text-anchor="middle" font-family="Liberation Sans">19</text>
<rect x="0.00" y="660.50" width="22.00" height="1.0" fill="#3a3a3a"/>
<text x="173.30" y="241.10" font-size="12.5" fill="#262626" font-weight="bold" font-family="Liberation Sans" textLength="90.10" lengthAdjust="spacingAndGlyphs" stroke="#262626" stroke-width="0.12">การควบคุมเอกสาร</text>
<text x="267.90" y="241.10" font-size="12.5" fill="#262626" font-weight="bold" font-family="Liberation Sans" textLength="50.20" lengthAdjust="spacingAndGlyphs" stroke="#262626" stroke-width="0.12">ส่วนงาน</text>
<text x="322.60" y="241.30" font-size="13.5" fill="#262626" font-weight="bold" font-family="Liberation Serif" textLength="84.60" lengthAdjust="spacingAndGlyphs" stroke="#262626" stroke-width="0.12">Transportation</text>
<text x="254.70" y="267.50" font-size="12" fill="#262626" font-weight="bold" font-family="Liberation Sans" textLength="70.30" lengthAdjust="spacingAndGlyphs" stroke="#262626" stroke-width="0.12">กลุ่มงานวางบิล</text>
<text x="28.00" y="314.50" font-size="11" fill="#262626" font-weight="normal" font-family="Liberation Sans" textLength="22.10" lengthAdjust="spacingAndGlyphs" stroke="#262626" stroke-width="0.12">ลำดับ</text>
<text x="35.00" y="336.50" font-size="11" fill="#262626" font-weight="normal" font-family="Liberation Sans" textLength="9.30" lengthAdjust="spacingAndGlyphs" stroke="#262626" stroke-width="0.12">ที่</text>
<text x="121.80" y="324.30" font-size="11" fill="#262626" font-weight="normal" font-family="Liberation Sans" textLength="40.20" lengthAdjust="spacingAndGlyphs" stroke="#262626" stroke-width="0.12">ชื่อเอกสาร</text>
<text x="247.80" y="314.50" font-size="11" fill="#262626" font-weight="normal" font-family="Liberation Sans" textLength="22.20" lengthAdjust="spacingAndGlyphs" stroke="#262626" stroke-width="0.12">ผู้ใช้</text>
<text x="240.50" y="336.50" font-size="11" fill="#262626" font-weight="normal" font-family="Liberation Sans" textLength="29.50" lengthAdjust="spacingAndGlyphs" stroke="#262626" stroke-width="0.12">เอกสาร</text>
<text x="290.50" y="314.50" font-size="11" fill="#262626" font-weight="normal" font-family="Liberation Sans" textLength="21.30" lengthAdjust="spacingAndGlyphs" stroke="#262626" stroke-width="0.12">ผู้เก็บ</text>
<text x="285.90" y="336.50" font-size="11" fill="#262626" font-weight="normal" font-family="Liberation Sans" textLength="29.40" lengthAdjust="spacingAndGlyphs" stroke="#262626" stroke-width="0.12">เอกสาร</text>
<text x="326.60" y="314.50" font-size="11" fill="#262626" font-weight="normal" font-family="Liberation Sans" textLength="39.40" lengthAdjust="spacingAndGlyphs" stroke="#262626" stroke-width="0.12">แฟ้มรหัส</text>
<text x="327.70" y="336.50" font-size="11" fill="#262626" font-weight="normal" font-family="Liberation Sans" textLength="38.30" lengthAdjust="spacingAndGlyphs" stroke="#262626" stroke-width="0.12">หมายเลข</text>
<text x="376.60" y="314.50" font-size="11" fill="#262626" font-weight="normal" font-family="Liberation Sans" textLength="30.80" lengthAdjust="spacingAndGlyphs" stroke="#262626" stroke-width="0.12">สถานที่</text>
<text x="369.50" y="336.50" font-size="11" fill="#262626" font-weight="normal" font-family="Liberation Sans" textLength="44.90" lengthAdjust="spacingAndGlyphs" stroke="#262626" stroke-width="0.12">เก็บเอกสาร</text>
<text x="420.50" y="314.50" font-size="11" fill="#262626" font-weight="normal" font-family="Liberation Sans" textLength="30.40" lengthAdjust="spacingAndGlyphs" stroke="#262626" stroke-width="0.12">อายุเก็บ</text>
<text x="421.50" y="336.50" font-size="11" fill="#262626" font-weight="normal" font-family="Liberation Sans" textLength="28.40" lengthAdjust="spacingAndGlyphs" stroke="#262626" stroke-width="0.12">เอกสาร</text>
<text x="458.70" y="314.50" font-size="11" fill="#262626" font-weight="normal" font-family="Liberation Sans" textLength="47.80" lengthAdjust="spacingAndGlyphs" stroke="#262626" stroke-width="0.12">ครบกำหนด</text>
<text x="469.30" y="336.50" font-size="11" fill="#262626" font-weight="normal" font-family="Liberation Sans" textLength="26.60" lengthAdjust="spacingAndGlyphs" stroke="#262626" stroke-width="0.12">ทำลาย</text>
<text x="510.00" y="325.50" font-size="11" fill="#262626" font-weight="normal" font-family="Liberation Sans" textLength="40.00" lengthAdjust="spacingAndGlyphs" stroke="#262626" stroke-width="0.12">หมายเหตุ</text>
<text x="53.75" y="358.75" font-size="11" fill="#262626" font-weight="bold" font-family="Liberation Sans" textLength="43.75" lengthAdjust="spacingAndGlyphs" stroke="#262626" stroke-width="0.12">งานวางบิล</text>
<rect x="53.75" y="359.8" width="43.75" height="1.1" fill="#262626"/>
<text x="38.8" y="381.50" font-size="9.5" fill="#262626" text-anchor="middle" font-family="Liberation Serif">1</text>
<text x="54.00" y="381.50" font-size="11" fill="#262626" font-weight="normal" font-family="Liberation Sans" textLength="101.80" lengthAdjust="spacingAndGlyphs" stroke="#262626" stroke-width="0.12">เช็ครับซองงานระหว่างวัน</text>
<text x="243.20" y="381.50" font-size="11" fill="#262626" font-weight="normal" font-family="Liberation Sans" textLength="24.10" lengthAdjust="spacingAndGlyphs" stroke="#262626" stroke-width="0.12">ขนส่ง</text>
<text x="285.90" y="381.50" font-size="11" fill="#262626" font-weight="normal" font-family="Liberation Sans" textLength="29.40" lengthAdjust="spacingAndGlyphs" stroke="#262626" stroke-width="0.12">อรนภา</text>
<rect x="345.4" y="377.90" width="3" height="1" fill="#262626"/>
<text x="373.00" y="381.50" font-size="11" fill="#262626" font-weight="normal" font-family="Liberation Sans" textLength="36.80" lengthAdjust="spacingAndGlyphs" stroke="#262626" stroke-width="0.12">ตู้เอกสาร</text>
<text x="428.6" y="381.50" font-size="9.5" fill="#262626" font-family="Liberation Serif">1</text>
<text x="434.50" y="381.50" font-size="11" fill="#262626" font-weight="normal" font-family="Liberation Sans" textLength="7.20" lengthAdjust="spacingAndGlyphs" stroke="#262626" stroke-width="0.12">ปี</text>
<text x="38.8" y="404.20" font-size="9.5" fill="#262626" text-anchor="middle" font-family="Liberation Serif">2</text>
<text x="54.00" y="404.20" font-size="11" fill="#262626" font-weight="normal" font-family="Liberation Sans" textLength="87.90" lengthAdjust="spacingAndGlyphs" stroke="#262626" stroke-width="0.12">วางบิลงานในแต่ละวัน</text>
<text x="243.20" y="404.20" font-size="11" fill="#262626" font-weight="normal" font-family="Liberation Sans" textLength="24.10" lengthAdjust="spacingAndGlyphs" stroke="#262626" stroke-width="0.12">ขนส่ง</text>
<text x="287.00" y="404.20" font-size="11" fill="#262626" font-weight="normal" font-family="Liberation Sans" textLength="27.20" lengthAdjust="spacingAndGlyphs" stroke="#262626" stroke-width="0.12">สาทิตย์</text>
<rect x="345.4" y="400.60" width="3" height="1" fill="#262626"/>
<rect x="390.7" y="400.60" width="3" height="1" fill="#262626"/>
<text x="428.6" y="404.20" font-size="9.5" fill="#262626" font-family="Liberation Serif">1</text>
<text x="434.50" y="404.20" font-size="11" fill="#262626" font-weight="normal" font-family="Liberation Sans" textLength="7.20" lengthAdjust="spacingAndGlyphs" stroke="#262626" stroke-width="0.12">ปี</text>
<text x="38.8" y="426.90" font-size="9.5" fill="#262626" text-anchor="middle" font-family="Liberation Serif">3</text>
<text x="54.00" y="426.90" font-size="11" fill="#262626" font-weight="normal" font-family="Liberation Sans" textLength="136.70" lengthAdjust="spacingAndGlyphs" stroke="#262626" stroke-width="0.12">เคลียร์ยอดเงินคืนบัญชีในแต่ละวัน</text>
<text x="243.20" y="426.90" font-size="11" fill="#262626" font-weight="normal" font-family="Liberation Sans" textLength="24.10" lengthAdjust="spacingAndGlyphs" stroke="#262626" stroke-width="0.12">ขนส่ง</text>
<text x="290.50" y="426.90" font-size="11" fill="#262626" font-weight="normal" font-family="Liberation Sans" textLength="21.30" lengthAdjust="spacingAndGlyphs" stroke="#262626" stroke-width="0.12">วันดา</text>
<rect x="345.4" y="423.30" width="3" height="1" fill="#262626"/>
<text x="373.00" y="426.90" font-size="11" fill="#262626" font-weight="normal" font-family="Liberation Sans" textLength="36.80" lengthAdjust="spacingAndGlyphs" stroke="#262626" stroke-width="0.12">ตู้เอกสาร</text>
<text x="428.6" y="426.90" font-size="9.5" fill="#262626" font-family="Liberation Serif">1</text>
<text x="434.50" y="426.90" font-size="11" fill="#262626" font-weight="normal" font-family="Liberation Sans" textLength="7.20" lengthAdjust="spacingAndGlyphs" stroke="#262626" stroke-width="0.12">ปี</text>
<text x="38.8" y="449.60" font-size="9.5" fill="#262626" text-anchor="middle" font-family="Liberation Serif">4</text>
<text x="54.00" y="449.60" font-size="11" fill="#262626" font-weight="normal" font-family="Liberation Sans" textLength="110.70" lengthAdjust="spacingAndGlyphs" stroke="#262626" stroke-width="0.12">ปิดยอดวางบิลในแต่ละเดือน</text>
<text x="243.20" y="449.60" font-size="11" fill="#262626" font-weight="normal" font-family="Liberation Sans" textLength="24.10" lengthAdjust="spacingAndGlyphs" stroke="#262626" stroke-width="0.12">ขนส่ง</text>
<text x="288.70" y="449.60" font-size="11" fill="#262626" font-weight="normal" font-family="Liberation Sans" textLength="24.80" lengthAdjust="spacingAndGlyphs" stroke="#262626" stroke-width="0.12">วิเวียน</text>
<rect x="345.4" y="446.00" width="3" height="1" fill="#262626"/>
<text x="373.00" y="449.60" font-size="11" fill="#262626" font-weight="normal" font-family="Liberation Sans" textLength="36.80" lengthAdjust="spacingAndGlyphs" stroke="#262626" stroke-width="0.12">ตู้เอกสาร</text>
<text x="428.6" y="449.60" font-size="9.5" fill="#262626" font-family="Liberation Serif">1</text>
<text x="434.50" y="449.60" font-size="11" fill="#262626" font-weight="normal" font-family="Liberation Sans" textLength="7.20" lengthAdjust="spacingAndGlyphs" stroke="#262626" stroke-width="0.12">ปี</text>
<rect x="0" y="644" width="960" height="27" fill="#0b0f1b"/><rect x="0" y="670" width="960" height="1" fill="#2a2d33"/>
<path d="M0 643H208V648a4 4 0 0 1-4 0z" fill="none"/>
<path d="M209.3 644H297.7V663a4 4 0 0 1-4 4H213.3a4 4 0 0 1-4-4z" fill="#ffffff"/>
<path d="M204 644h5.3v5.3a5.3 5.3 0 0 0-5.3-5.3z" fill="#ffffff"/>
<path d="M303 644h-5.3v5.3a5.3 5.3 0 0 1 5.3-5.3z" fill="#ffffff"/>
<path d="M24.5 653.5l-3 3.5 3 3.5M50.5 653.5l3 3.5-3 3.5" fill="none" stroke="#8a8a8a" stroke-width="1.1"/>
<text x="101.70" y="661.00" font-size="11.5" fill="#e8e8e8" font-weight="bold" font-family="Liberation Sans" textLength="33.30" lengthAdjust="spacingAndGlyphs" >หน้าปก</text>
<text x="160.00" y="661.00" font-size="11.5" fill="#e8e8e8" font-weight="bold" font-family="Liberation Sans" textLength="34.00" lengthAdjust="spacingAndGlyphs" >สารบัญ</text>
<text x="216.25" y="661.00" font-size="11.5" fill="#262626" font-weight="bold" font-family="Liberation Sans" textLength="75.65" lengthAdjust="spacingAndGlyphs" >ควบคุมเอกสาร</text>
<rect x="216.25" y="662.8" width="75.65" height="1.7" fill="#1e7145"/>
<text x="313.30" y="661.00" font-size="11.5" fill="#e8e8e8" font-weight="bold" font-family="Liberation Sans" textLength="13.40" lengthAdjust="spacingAndGlyphs" >ผัง</text>
<text x="349.30" y="661.00" font-size="11.5" fill="#e8e8e8" font-weight="bold" font-family="Liberation Sans" textLength="38.00" lengthAdjust="spacingAndGlyphs" >ขอบเขต</text>
<text x="411.70" y="661.00" font-size="11.5" fill="#e8e8e8" font-weight="bold" font-family="Liberation Sans" textLength="35.60" lengthAdjust="spacingAndGlyphs" >ใบใช้รถ</text>
<text x="471.70" y="661.00" font-size="11.5" fill="#e8e8e8" font-weight="bold" font-family="Liberation Sans" textLength="51.00" lengthAdjust="spacingAndGlyphs" >รับซองงาน</text>
<text x="548.30" y="661.00" font-size="11.5" fill="#e8e8e8" font-weight="bold" font-family="Liberation Sans" textLength="66.70" lengthAdjust="spacingAndGlyphs" >รับซองงาน (3)</text>
<text x="642.00" y="661.00" font-size="11.5" fill="#e8e8e8" font-weight="bold" font-family="Liberation Sans" textLength="66.70" lengthAdjust="spacingAndGlyphs" >รับซองงาน (2)</text>
<rect x="146.80" y="650" width="1" height="14.4" fill="#4a4a4a"/>
<rect x="205.10" y="650" width="1" height="14.4" fill="#4a4a4a"/>
<rect x="300.80" y="650" width="1" height="14.4" fill="#4a4a4a"/>
<rect x="335.50" y="650" width="1" height="14.4" fill="#4a4a4a"/>
<rect x="398.50" y="650" width="1" height="14.4" fill="#4a4a4a"/>
<rect x="459.50" y="650" width="1" height="14.4" fill="#4a4a4a"/>
<rect x="535.50" y="650" width="1" height="14.4" fill="#4a4a4a"/>
<rect x="628.40" y="650" width="1" height="14.4" fill="#4a4a4a"/>
<circle cx="724.8" cy="657.3" r="1.3" fill="#e8e8e8"/>
<circle cx="728.3" cy="657.3" r="1.3" fill="#e8e8e8"/>
<circle cx="731.8" cy="657.3" r="1.3" fill="#e8e8e8"/>
<path d="M749.5 657.3h9.5M754.25 652.5v9.5" stroke="#e0e0e0" stroke-width="1.1"/>
<circle cx="781" cy="653.5" r="1" fill="#e0e0e0"/>
<circle cx="781" cy="657.5" r="1" fill="#e0e0e0"/>
<circle cx="781" cy="661.5" r="1" fill="#e0e0e0"/>
<rect x="793.8" y="650.7" width="180" height="13.1" rx="6.5" fill="#1d1d1d"/>
<path d="M802.6 653.5v7.5l-5-3.75z" fill="#9a9a9a"/>
<rect x="808" y="653.2" width="160" height="7.8" rx="3.9" fill="#9d9d9d"/>
</svg>
</body></html>
